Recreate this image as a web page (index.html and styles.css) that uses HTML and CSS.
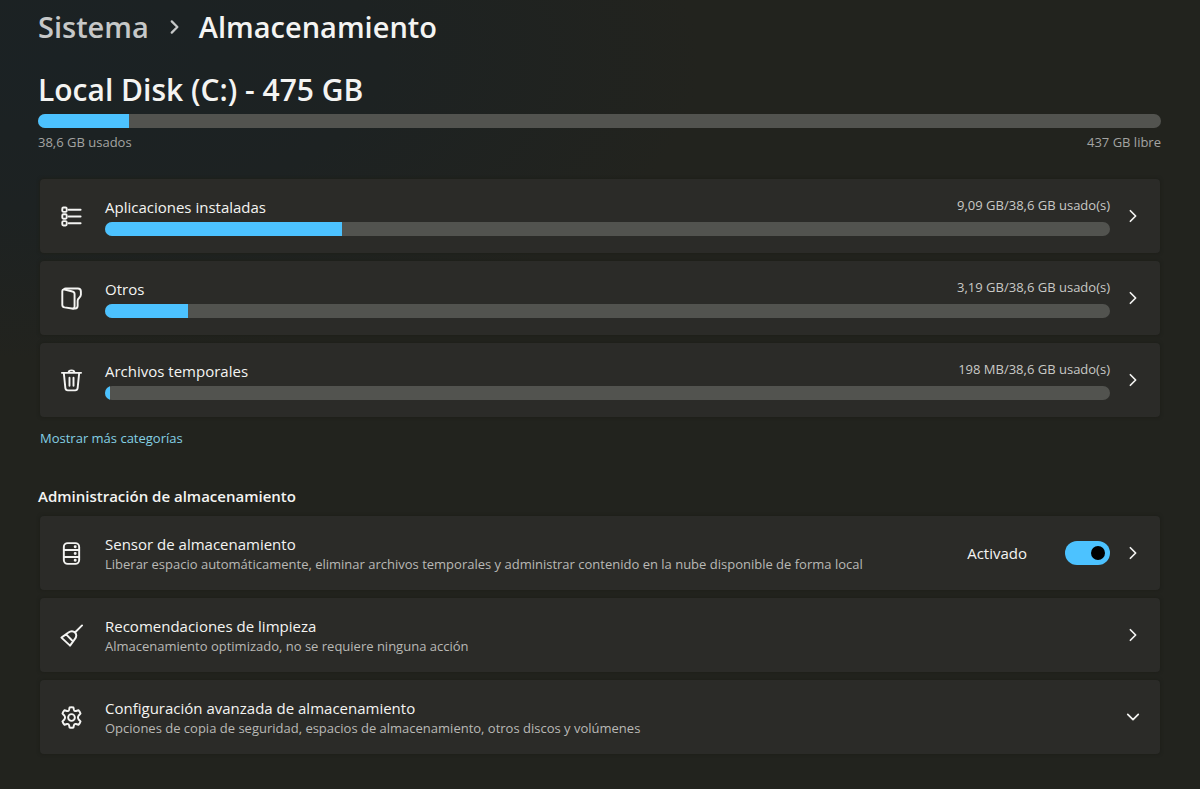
FILE: index.html
```html
<!DOCTYPE html>
<html lang="es">
<head>
<meta charset="UTF-8">
<meta name="viewport" content="width=device-width, initial-scale=1.0">
<title>Almacenamiento</title>
<link rel="stylesheet" href="styles.css">
</head>
<body>

  <main class="page">
    <nav class="breadcrumb">
      <a href="#sistema">Sistema</a>
      <svg class="crumb-arrow" viewBox="0 0 16 16"><path d="M6 3l5 5-5 5"/></svg>
      <h1>Almacenamiento</h1>
    </nav>

    <section class="disk">
      <h2 id="disk-name">Local Disk (C:) - 475 GB</h2>
      <progress value="38.6" max="475" aria-labelledby="disk-name"></progress>
      <div class="disk-info">
        <span>38,6 GB usados</span>
        <span>437 GB libre</span>
      </div>
    </section>

    <div class="list">
      <a class="card" href="#aplicaciones">
        <svg class="icon" viewBox="0 0 24 24">
          <rect x="2.4" y="2.6" width="4.6" height="4.6" rx="1.2"/>
          <rect x="2.4" y="9.7" width="4.6" height="4.6" rx="1.2"/>
          <rect x="2.4" y="16.8" width="4.6" height="4.6" rx="1.2"/>
          <path d="M9 5H21.5M9 12H21.5M9 19H21.5"/>
        </svg>
        <div class="usage">
          <div class="usage-head">
            <span class="title" id="apps">Aplicaciones instaladas</span>
            <span class="amount">9,09 GB/38,6 GB usado(s)</span>
          </div>
          <progress value="9.09" max="38.6" aria-labelledby="apps"></progress>
        </div>
        <svg class="chevron" viewBox="0 0 16 16"><path d="M5 2l6 6-6 6"/></svg>
      </a>

      <a class="card" href="#otros">
        <svg class="icon" viewBox="0 0 24 24">
          <path d="M2.4 4.4V18.4Q2.4 20.8 4.8 21.3L12.4 22.5Q15.2 22.8 15.2 20.2V7.4Q15.2 5.2 13 4.7L4.8 2.6Q2.4 2.2 2.4 4.4Z"/>
          <path d="M4.4 2.2Q4.8 1.6 6 1.6H18.6Q21.8 1.6 21.8 4.6V8.2C21.8 11.2 18.4 11.2 18.4 14.4V19.6Q18.4 22.4 15.8 22.4H13.4"/>
        </svg>
        <div class="usage">
          <div class="usage-head">
            <span class="title" id="others">Otros</span>
            <span class="amount">3,19 GB/38,6 GB usado(s)</span>
          </div>
          <progress value="3.19" max="38.6" aria-labelledby="others"></progress>
        </div>
        <svg class="chevron" viewBox="0 0 16 16"><path d="M5 2l6 6-6 6"/></svg>
      </a>

      <a class="card" href="#temporales">
        <svg class="icon" viewBox="0 0 24 24">
          <path d="M2 4H22M9 3.8C9 .6 15 .6 15 3.8M4 4.3L5.6 20Q5.9 22.3 8.2 22.3H15.8Q18.1 22.3 18.4 20L20 4.3M9.9 9V17.5M14.1 9V17.5"/>
        </svg>
        <div class="usage">
          <div class="usage-head">
            <span class="title" id="temp">Archivos temporales</span>
            <span class="amount">198 MB/38,6 GB usado(s)</span>
          </div>
          <progress value="0.198" max="38.6" aria-labelledby="temp"></progress>
        </div>
        <svg class="chevron" viewBox="0 0 16 16"><path d="M5 2l6 6-6 6"/></svg>
      </a>

      <a class="more" href="#categorias">Mostrar más categorías</a>
    </div>

    <h3>Administración de almacenamiento</h3>

    <div class="list">
      <div class="card">
        <svg class="icon" viewBox="0 0 24 24">
          <rect x="4" y="1.2" width="16" height="21.6" rx="4"/>
          <path d="M4 8.4H20M4 15.6H20"/>
          <path class="dots" d="M15.8 4.9h.1M15.8 12h.1M15.8 19h.1"/>
        </svg>
        <a class="text" href="#sensor">
          <span class="title">Sensor de almacenamiento</span>
          <span class="desc">Liberar espacio automáticamente, eliminar archivos temporales y administrar contenido en la nube disponible de forma local</span>
        </a>
        <label class="switch">
          <span class="title">Activado</span>
          <input type="checkbox" checked>
        </label>
        <svg class="chevron" viewBox="0 0 16 16"><path d="M5 2l6 6-6 6"/></svg>
      </div>

      <a class="card" href="#limpieza">
        <svg class="icon" viewBox="0 0 24 24">
          <path d="M23 1.5L15.6 8.9M1.5 14.2L8.4 9.2C11 7.2 13.8 7.2 15.6 8.9C17.4 10.7 17.2 13.4 15.4 15.8L10.5 22.6ZM6.4 10.8L13.4 18"/>
        </svg>
        <div class="text">
          <span class="title">Recomendaciones de limpieza</span>
          <span class="desc">Almacenamiento optimizado, no se requiere ninguna acción</span>
        </div>
        <svg class="chevron" viewBox="0 0 16 16"><path d="M5 2l6 6-6 6"/></svg>
      </a>

      <button class="card" type="button" aria-expanded="false">
        <svg class="icon" viewBox="0 0 24 24">
          <path d="M10 1.5Q12 1 14 1.5L14.6 4.1Q15.1 5.7 16.7 5.2L19.3 4.4Q20.8 5.9 21.4 7.9L19.5 9.9Q18 12 19.5 14.1L21.4 16.1Q20.8 18.1 19.3 19.6L16.7 18.8Q15.1 18.3 14.6 19.9L14 22.5Q12 23 10 22.5L9.4 19.9Q8.9 18.3 7.3 18.8L4.7 19.6Q3.2 18.1 2.6 16.1L4.5 14.1Q6 12 4.5 9.9L2.6 7.9Q3.2 5.9 4.7 4.4L7.3 5.2Q8.9 5.7 9.4 4.1Z"/>
          <circle cx="12" cy="12" r="3.5"/>
        </svg>
        <span class="text">
          <span class="title">Configuración avanzada de almacenamiento</span>
          <span class="desc">Opciones de copia de seguridad, espacios de almacenamiento, otros discos y volúmenes</span>
        </span>
        <svg class="chevron" viewBox="0 0 16 16"><path d="M2 5l6 6 6-6"/></svg>
      </button>
    </div>
  </main>

</body>
</html>
```

FILE: styles.css
```css
* {
  box-sizing: border-box;
  margin: 0;
  padding: 0;
}

body {
  min-height: 100vh;
  font-family: "Segoe UI", "Open Sans", "Noto Sans", sans-serif;
  color: #f4f4f2;
  background: radial-gradient(ellipse 640px 300px at 60px 60px, #1b2224 0%, #1d2222 50%, #22231e 100%) #22231e;
}

a {
  color: inherit;
  text-decoration: none;
}

svg {
  flex: none;
  fill: none;
  stroke: #f4f4f2;
  stroke-width: 2;
  stroke-linecap: round;
  stroke-linejoin: round;
}

.page {
  padding: 4px 39px 32px 38px;
}

/* Header */

.breadcrumb {
  display: flex;
  align-items: center;
  gap: 16px;
  font-size: 29px;
  font-weight: 600;
  line-height: 46px;
}

.breadcrumb a {
  color: #c6c8c8;
}

.breadcrumb h1 {
  font-size: 29px;
  font-weight: 600;
}

.crumb-arrow {
  width: 18px;
  height: 18px;
  stroke: #c6c8c8;
}

/* Disk */

.disk {
  padding-top: 18px;
}

.disk h2 {
  font-size: 30px;
  font-weight: 600;
  line-height: 44px;
  margin-bottom: 2px;
}

.disk-info {
  display: flex;
  justify-content: space-between;
  padding-top: 4px;
  margin-bottom: 27px;
  font-size: 13px;
  line-height: 20px;
  color: #a3a4a2;
}

progress {
  display: block;
  width: 100%;
  height: 14px;
  border: none;
  border-radius: 7px;
  overflow: hidden;
  appearance: none;
  background-color: #52534f;
}

progress::-webkit-progress-bar {
  background-color: #52534f;
}

progress::-webkit-progress-value {
  background-color: #4cc2ff;
}

/* Cards */

.list {
  display: flex;
  flex-direction: column;
  gap: 8px;
  padding: 0 1px 0 2px;
}

.card {
  display: flex;
  align-items: center;
  width: 100%;
  min-height: 74px;
  padding: 0 20px;
  border: none;
  border-radius: 4px;
  font-family: inherit;
  color: inherit;
  text-align: left;
  background-color: #2b2b28;
  box-shadow: 0 0 3px 1px #1e1f1a;
}

.icon {
  width: 23px;
  height: 23px;
  margin-right: 22px;
}

.dots {
  stroke-width: 3;
}

.chevron {
  width: 14px;
  height: 14px;
  margin-left: 16px;
}

.usage {
  flex: 1;
}

.usage-head {
  display: flex;
  justify-content: space-between;
  margin-bottom: 4px;
}

.title {
  font-size: 15px;
  line-height: 22px;
}

.amount {
  font-size: 13px;
  line-height: 18px;
  color: #c9c9c6;
}

.text {
  display: flex;
  flex-direction: column;
  flex: 1;
}

.desc {
  font-size: 13px;
  line-height: 18px;
  color: #b9b9b6;
}

.more {
  align-self: flex-start;
  margin-top: 3px;
  font-size: 13px;
  line-height: 20px;
  color: #84d0e4;
}

h3 {
  margin: 37px 0 9px;
  font-size: 15px;
  font-weight: 600;
  line-height: 22px;
}

/* Switch */

.switch {
  display: flex;
  align-items: center;
  gap: 38px;
}

.switch input {
  display: flex;
  align-items: center;
  justify-content: flex-end;
  width: 45px;
  height: 24px;
  padding-right: 5px;
  border-radius: 12px;
  appearance: none;
  background-color: #4cc2ff;
}

.switch input::before {
  content: "";
  width: 14px;
  height: 14px;
  border-radius: 50%;
  background-color: #000;
}

.switch input:not(:checked) {
  justify-content: flex-start;
  padding-left: 5px;
  background-color: #52534f;
}
```
